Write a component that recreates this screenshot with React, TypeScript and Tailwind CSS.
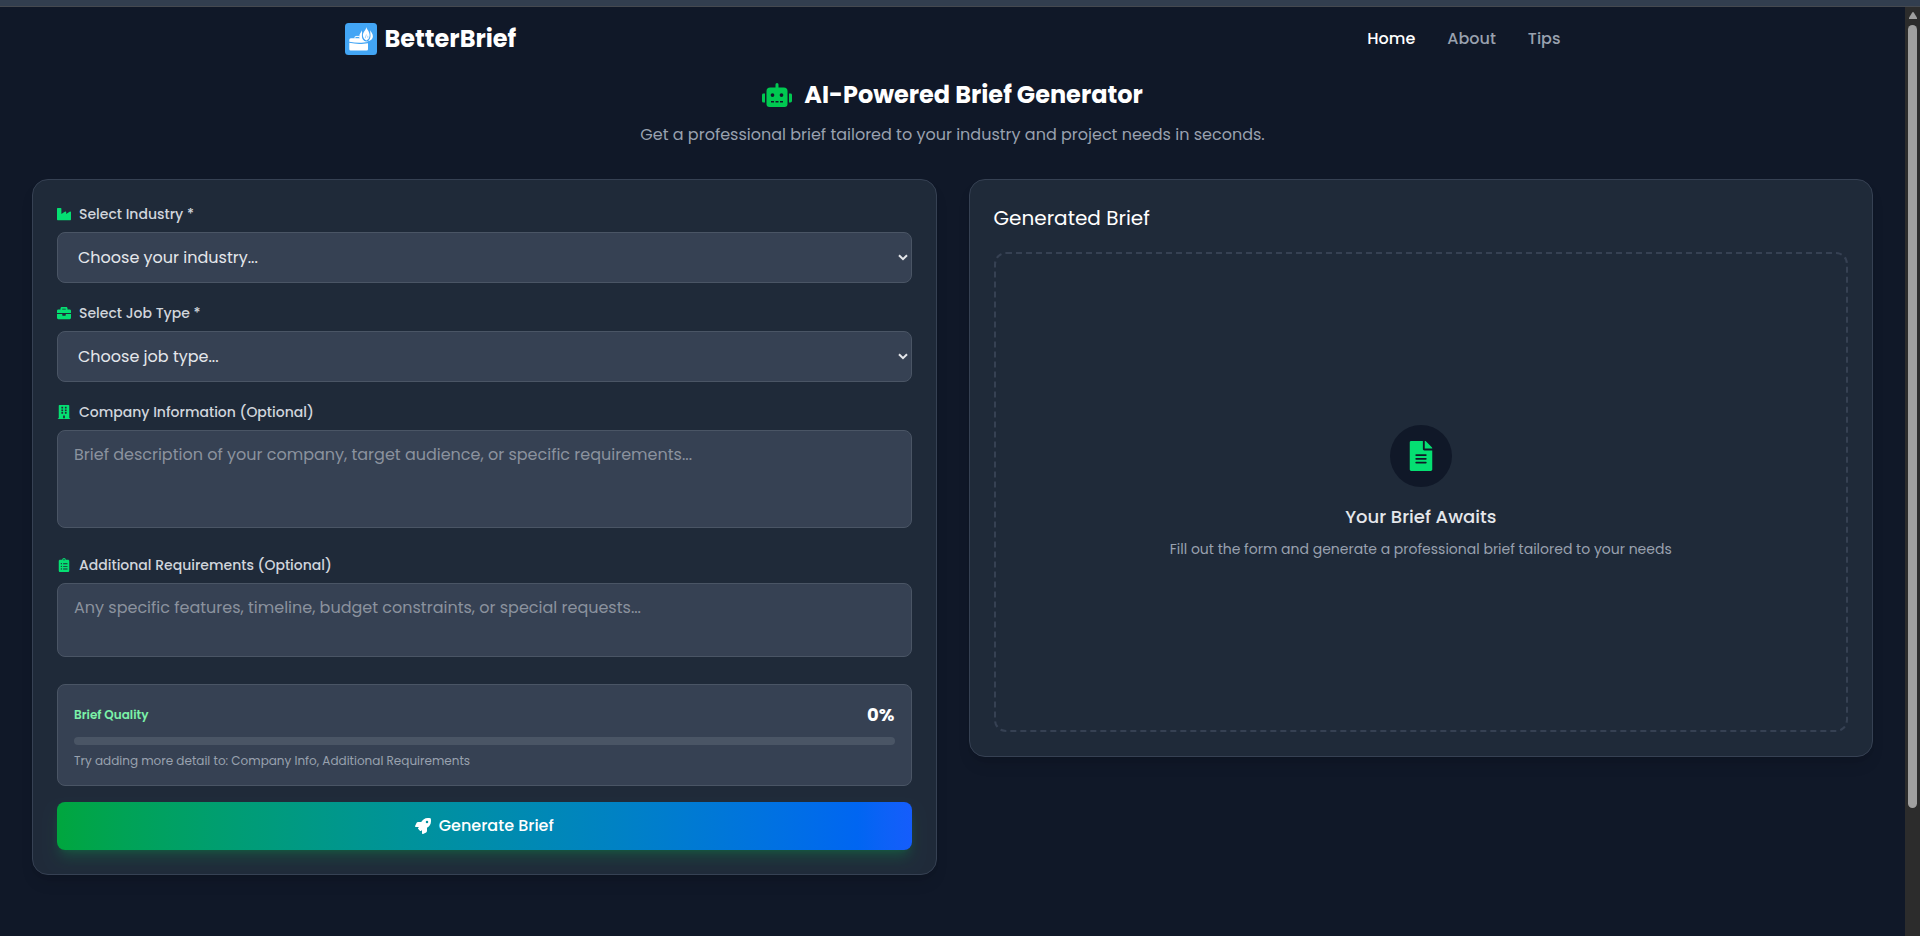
import type { ReactNode } from "react";
import { FaRobot, FaIndustry, FaBriefcase, FaBuilding, FaClipboardList, FaRocket, FaFileAlt } from "react-icons/fa";

function Logo() {
  return (
    <svg viewBox="0 0 32 32" className="size-8 shrink-0">
      <rect width="32" height="32" rx="3.500" fill="#42a5f5" />
      <path d="M10 15.500v-1.300q0-.8.800-.8h3.400l1.300 1.600" fill="none" stroke="#fff" strokeWidth="1" />
      <g fill="#fff">
        <path d="M4.300 16.700q0-1.500 1.500-1.500h10.200c1.200 1.700 3 2.900 5 3.300h1.800v.6l-6.300.7q-6 .3-12.200-1.100z" />
        <path d="M4.300 19.800q6 1.400 12.200 1.100l6.500-.700v6q0 1.300-1.300 1.300H5.600q-1.300 0-1.300-1.300z" />
        <path d="M21.300 4c.4 2.600 3.300 4.300 3.300 8.300 0 2.500-1.200 4.300-3.100 5.200-2-.9-3.600-2.800-3.600-5.300C17.900 8.700 21 7.500 21.300 4z" />
        <path d="M16.800 7.300c-.3 2-2.500 3.500-2.500 6.200 0 2.600 2 4.400 5 4.700-1.600-1.300-2.400-3.100-2.400-5.400 0-2 .5-3.600-.1-5.500z" />
        <path d="M25.500 7.300c.5 2 2.400 3.200 2.400 6 0 2.500-1.900 4.500-4.900 4.900 1.600-1.300 2.500-3.200 2.500-5.400 0-2-.5-3.600 0-5.500z" />
      </g>
      <path d="M21.400 11.500c-.2 1.500-1.200 2-1 3.700M22.800 12.800v2" stroke="#42a5f5" strokeWidth=".5" fill="none" />
    </svg>
  );
}

function Label({ icon, children }: { icon: ReactNode; children: ReactNode }) {
  return (
    <div className="mb-2 flex h-5 items-center gap-2 text-sm font-medium whitespace-nowrap text-gray-300">
      <span className="text-green-400">{icon}</span>
      {children}
    </div>
  );
}

function SelectBox({ children }: { children: ReactNode }) {
  return (
    <div className="mb-5 flex h-[51px] items-center justify-between rounded-lg border border-gray-600 bg-gray-700 pr-[3px] pl-5 text-gray-200">
      {children}
      <svg viewBox="0 0 10 7" className="h-[7px] w-[10px]" fill="none" stroke="currentColor" strokeWidth="2">
        <path d="M1 1.200l4 4 4-4" />
      </svg>
    </div>
  );
}

export default function App() {
  return (
    <div className="flex h-[936px] w-[1920px] flex-col overflow-hidden bg-gray-900 font-[Poppins,Inter,sans-serif] text-base">
      <div className="h-[7px] shrink-0 border-b border-[#454950] bg-[#323e4f]" />
      <div className="flex min-h-0 flex-1">
        <div className="flex-1">
          <header className="mx-auto flex h-16 max-w-[1280px] items-center justify-between px-8 pb-[14px]">
            <div className="flex items-center gap-2 pt-[13px]">
              <Logo />
              <span className="text-2xl font-bold text-white">BetterBrief</span>
            </div>
            <nav className="flex gap-8 pt-[14px] font-medium text-gray-400">
              <a className="text-white">Home</a>
              <a>About</a>
              <a>Tips</a>
            </nav>
          </header>
          <section className="flex flex-col items-center">
            <h1 className="mt-2 flex h-8 items-center gap-3 text-2xl font-bold text-white">
              <FaRobot className="text-3xl text-green-500" />
              <span>AI-Powered Brief Generator</span>
            </h1>
            <p className="mt-3 text-gray-400">Get a professional brief tailored to your industry and project needs in seconds.</p>
          </section>
          <main className="mt-8 grid grid-cols-2 items-start gap-8 px-8">
            <section className="h-[696px] rounded-2xl border border-gray-700 bg-[#1f2a39] p-6 shadow-lg">
              <Label icon={<FaIndustry />}>
                <span>Select Industry *</span>
              </Label>
              <SelectBox>
                <span>Choose your industry...</span>
              </SelectBox>
              <Label icon={<FaBriefcase />}>
                <span>Select Job Type *</span>
              </Label>
              <SelectBox>
                <span>Choose job type...</span>
              </SelectBox>
              <Label icon={<FaBuilding />}>
                <span>Company Information (Optional)</span>
              </Label>
              <div className="mb-[27px] h-[98px] rounded-lg border border-gray-600 bg-gray-700 px-4 py-3 text-[#8b929e]">
                <span>Brief description of your company, target audience, or specific requirements...</span>
              </div>
              <Label icon={<FaClipboardList />}>
                <span>Additional Requirements (Optional)</span>
              </Label>
              <div className="mb-[27px] h-[74px] rounded-lg border border-gray-600 bg-gray-700 px-4 py-3 text-[#8b929e]">
                <span>Any specific features, timeline, budget constraints, or special requests...</span>
              </div>
              <div className="rounded-lg border border-gray-600 bg-gray-700 p-4">
                <div className="flex h-7 items-center justify-between">
                  <span className="text-xs font-semibold text-green-300">Brief Quality</span>
                  <span className="text-lg font-bold text-white">0%</span>
                </div>
                <div className="mt-2 h-2 rounded-full bg-gray-600" />
                <p className="mt-2 text-xs text-gray-400">Try adding more detail to: Company Info, Additional Requirements</p>
              </div>
              <button className="mt-4 flex h-12 w-full items-center justify-center gap-2 rounded-lg bg-gradient-to-r from-green-600 to-blue-600 font-medium text-white shadow-lg shadow-green-500/20">
                <FaRocket />
                <span>Generate Brief</span>
              </button>
            </section>
            <section className="rounded-2xl border border-gray-700 bg-[#1f2a39] p-6 shadow-lg">
              <h2 className="mb-5 text-xl text-white">Generated Brief</h2>
              <div className="flex h-[480px] flex-col items-center justify-center rounded-xl border-2 border-dashed border-gray-700">
                <div className="rounded-full bg-gray-900 p-4 text-3xl text-green-400">
                  <FaFileAlt />
                </div>
                <h3 className="mt-4 text-lg font-medium text-gray-200">Your Brief Awaits</h3>
                <p className="mt-2 text-sm text-gray-400">Fill out the form and generate a professional brief tailored to your needs</p>
              </div>
            </section>
          </main>
        </div>
        <div className="flex w-[15px] shrink-0 flex-col items-center bg-[#2c2c2c] pt-[5px]">
          <svg viewBox="0 0 8 7" className="h-[7px] w-2" fill="#9f9f9f">
            <path d="M3.200.6q.8-1.200 1.600 0L8 5.800V7H0V5.800z" />
          </svg>
          <div className="mt-[6px] h-[783px] w-[9px] rounded-full bg-[#9f9f9f]" />
        </div>
      </div>
    </div>
  );
}
